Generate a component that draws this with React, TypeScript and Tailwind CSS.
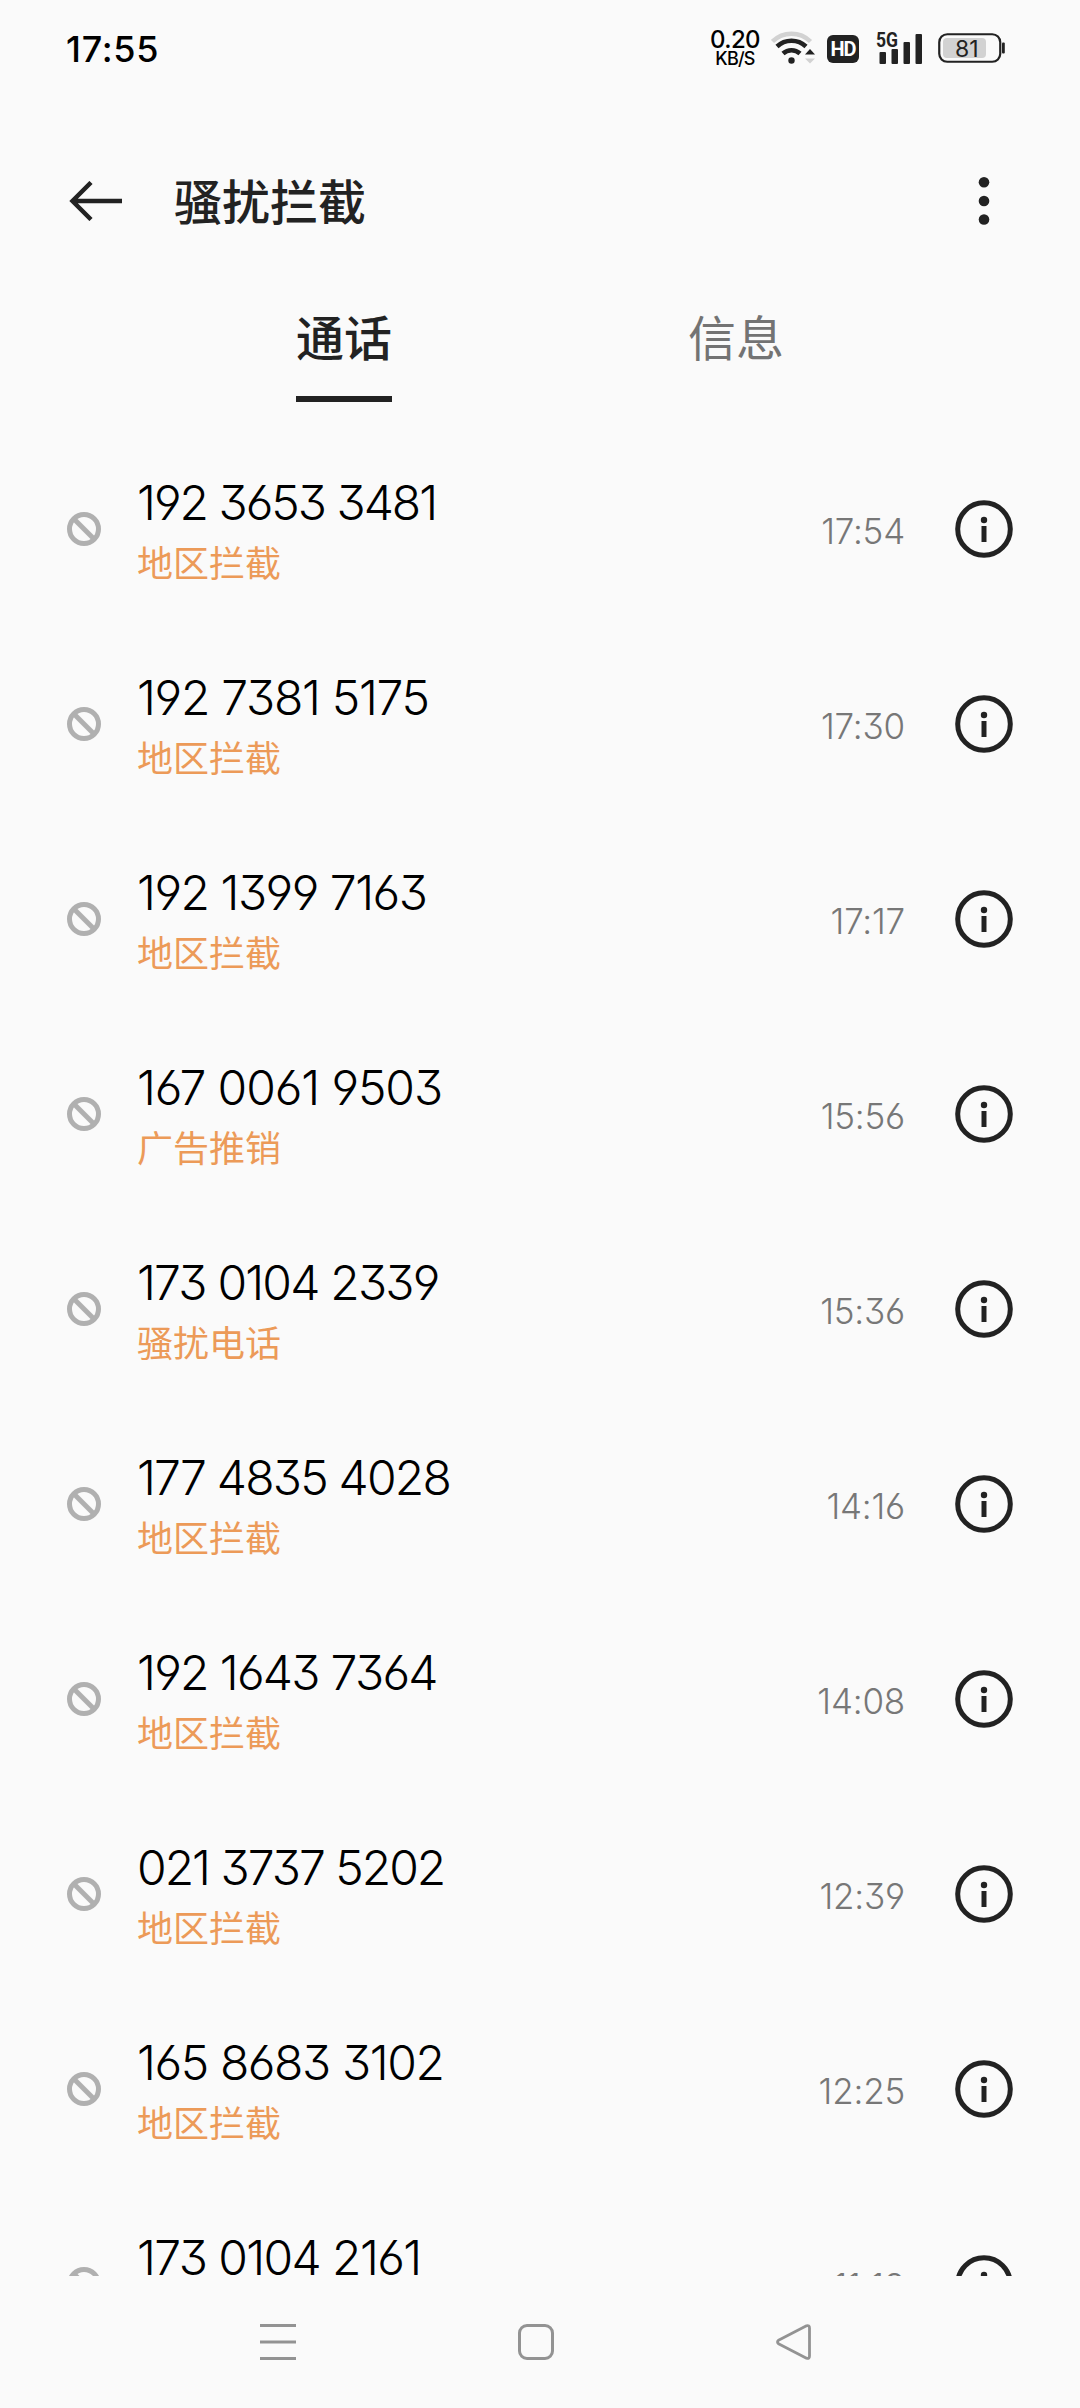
const calls = [
    { number: "192 3653 3481", label: "地区拦截", time: "17:54", tracking: "tracking-[-2px]" },
    { number: "192 7381 5175", label: "地区拦截", time: "17:30", tracking: "tracking-[-1.3px]" },
    { number: "192 1399 7163", label: "地区拦截", time: "17:17", tracking: "tracking-[-1.5px]" },
    { number: "167 0061 9503", label: "广告推销", time: "15:56", tracking: "tracking-[-1.1px]" },
    { number: "173 0104 2339", label: "骚扰电话", time: "15:36", tracking: "tracking-[-1.8px]" },
    { number: "177 4835 4028", label: "地区拦截", time: "14:16", tracking: "tracking-[-1.8px]" },
    { number: "192 1643 7364", label: "地区拦截", time: "14:08", tracking: "tracking-[-1.7px]" },
    { number: "021 3737 5202", label: "地区拦截", time: "12:39", tracking: "tracking-[-2px]" },
    { number: "165 8683 3102", label: "地区拦截", time: "12:25", tracking: "tracking-[-1.4px]" },
    { number: "173 0104 2161", label: "地区拦截", time: "11:18", tracking: "tracking-[-1.6px]" },
];

function StatusBar() {
    return (
        <header className="flex h-24 items-center pl-[66px] pr-[75px] text-black">
            <span className="pt-[2px] text-[36px] leading-none font-medium tracking-[0.7px]">17:55</span>
            <div className="ml-auto flex items-center">
                <div className="mr-[11px] flex flex-col items-center font-medium">
                    <span className="text-[24px] leading-[21px] tracking-[-0.6px]">0.20</span>
                    <span className="text-[18px] leading-[18px] tracking-[-0.8px]">KB/S</span>
                </div>
                <svg className="mr-[12px]" width="44" height="36" viewBox="0 0 44 36" fill="none">
                    <path d="M1.5 11.5a27 27 0 0 1 38 0" stroke="#d2d2d2" strokeWidth="4.5" />
                    <path d="M6 16.5a21 21 0 0 1 29 0" stroke="#222" strokeWidth="4.5" />
                    <path d="M12 23.5a12.5 12.5 0 0 1 17 0" stroke="#222" strokeWidth="4.5" />
                    <circle cx="20.5" cy="30.5" r="3.2" fill="#222" />
                    <path d="M34 24.5l5-5.5 5 5.5z" fill="#222" />
                    <path d="M34 28.5l5 5 5-5z" fill="#d2d2d2" />
                </svg>
                <div className="mt-[2px] mr-[17px] flex h-7 w-8 items-center justify-center rounded-[6px] bg-[#222] font-['Roboto'] text-[20px] leading-7 font-bold tracking-[-1px] text-white">
                    HD
                </div>
                <svg className="mr-[16px]" width="46" height="34" viewBox="0 0 46 34" fill="#222">
                    <text x="0" y="16" fontSize="20" fontWeight="700" fontFamily="Roboto, sans-serif" textLength="22" lengthAdjust="spacingAndGlyphs">5G</text>
                    <rect x="3.5" y="21" width="6.5" height="12" rx="1" />
                    <rect x="15.5" y="18" width="6.5" height="15" rx="1" />
                    <rect x="27.5" y="11" width="6.5" height="22" rx="1" />
                    <rect x="39.5" y="3" width="6.5" height="30" rx="1" />
                </svg>
                <svg width="67" height="30" viewBox="0 0 67 30">
                    <rect x="1.25" y="1.25" width="61" height="27.5" rx="8" fill="none" stroke="#222" strokeWidth="2.2" />
                    <rect x="5" y="5" width="43" height="20" rx="4" fill="#d2d2d2" />
                    <rect x="64" y="9.500" width="2.8" height="11" rx="1" fill="#222" />
                    <text x="17" y="23.500" fontSize="23" fill="#222" fontFamily="Inter, sans-serif">81</text>
                </svg>
            </div>
        </header>
    );
}

function TitleBar() {
    return (
        <div className="flex h-[210px] items-center pr-[90px] pl-[69px] text-[#222]">
            <svg width="54" height="40" viewBox="0 0 54 40" fill="none" stroke="currentColor" strokeWidth="4.5">
                <path d="M53 20H4M22 1.500L3.500 20 22 38.500" />
            </svg>
            <h1 className="ml-[51px] pt-[3px] text-[48px] leading-[60px] font-medium">骚扰拦截</h1>
            <svg className="ml-auto" width="12" height="50" viewBox="0 0 12 50" fill="currentColor">
                <circle cx="6" cy="6.3" r="5.3" />
                <circle cx="6" cy="25" r="5.3" />
                <circle cx="6" cy="43.5" r="5.3" />
            </svg>
        </div>
    );
}

function Tabs() {
    return (
        <nav className="flex h-[125px] gap-[296px] pl-[296px]">
            <div className="h-[96px] w-[96px] border-b-6 border-[#222] pt-[3px] text-[48px] leading-[60px] font-medium text-[#222]">通话</div>
            <div className="pt-[3px] text-[48px] leading-[60px] text-[#737373]">信息</div>
        </nav>
    );
}

function BlockedIcon() {
    return (
        <svg width="34" height="34" viewBox="0 0 34 34" fill="none" stroke="#b0b0b0" strokeWidth="5">
            <circle cx="17" cy="17" r="14.5" />
            <path d="M7 7l20 20" />
        </svg>
    );
}

function InfoIcon() {
    return (
        <svg width="58" height="58" viewBox="0 0 58 58" fill="#222">
            <circle cx="29" cy="29" r="26.3" fill="none" stroke="#222" strokeWidth="5" />
            <circle cx="29" cy="20" r="3.2" />
            <rect x="26.5" y="26" width="5" height="16" />
        </svg>
    );
}

export default function App() {
    return (
        <div className="flex h-[2408px] w-[1080px] flex-col overflow-hidden bg-[#fafafa] font-['Inter','Noto_Sans_CJK_SC',sans-serif]">
            <StatusBar />
            <TitleBar />
            <Tabs />
            <main className="h-[1845px] overflow-hidden">
                {calls.map((call) => (
                    <div key={call.number} className="flex h-[195px] items-center px-[67px] [font-feature-settings:'cv03','cv04','cv09']">
                        <BlockedIcon />
                        <div className="ml-[36px] pt-[6px]">
                            <p className={`text-[48px] leading-[58px] font-light text-black ${call.tracking}`}>{call.number}</p>
                            <p className="mt-[6px] text-[36px] leading-[52px] text-[#ec9a58]">{call.label}</p>
                        </div>
                        <span className="mr-[50px] ml-auto pt-[5px] text-[35px] leading-[42px] font-light tracking-[-0.2px] text-[#777]">{call.time}</span>
                        <InfoIcon />
                    </div>
                ))}
            </main>
            <footer className="flex h-[132px] items-center justify-between pr-[268px] pl-[260px]">
                <svg width="36" height="36" viewBox="0 0 36 36" fill="#939393">
                    <path d="M0 0h36v3H0zM0 16.500h36v3H0zM0 33h36v3H0z" />
                </svg>
                <div className="h-9 w-9 rounded-[9px] border-3 border-[#939393]" />
                <svg width="36" height="36" viewBox="0 0 36 36" fill="none" stroke="#939393" strokeWidth="2.8" strokeLinejoin="round">
                    <path d="M2.500 16.200L30.500 1.800Q33.500 1 33.500 4V32Q33.500 35 30.500 34.200L2.500 19.800Q0.500 18 2.500 16.200Z" />
                </svg>
            </footer>
        </div>
    );
}
